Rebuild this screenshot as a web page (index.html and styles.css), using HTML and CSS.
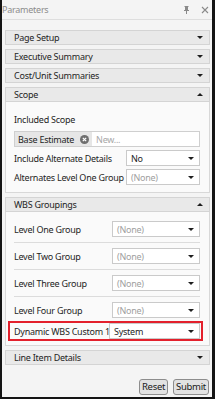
FILE: index.html
```html
<!DOCTYPE html>
<html lang="en">
<head>
    <meta charset="UTF-8">
    <title>Parameters</title>
    <link rel="stylesheet" href="styles.css">
</head>
<body>
    <div class="window">
        <div class="titlebar">
            <span class="title">Parameters</span>
            <span class="title-icons">
                <svg width="7" height="8" viewBox="0 0 7 8"><path d="M1.5 0h4v1h-0.5v3h1v1h-2v3h-1v-3h-2v-1h1v-3h-0.5z" fill="#8a8a8a"/></svg>
                <svg width="8" height="8" viewBox="0 0 8 8"><path d="M1 1l6 6M7 1l-6 6" stroke="#8a8a8a" stroke-width="1.1"/></svg>
            </span>
        </div>
        <div class="panels">
            <div class="section">
                <div class="header"><span>Page Setup</span><span class="arrow down"></span></div>
            </div>
            <div class="section">
                <div class="header"><span>Executive Summary</span><span class="arrow down"></span></div>
            </div>
            <div class="section">
                <div class="header"><span>Cost/Unit Summaries</span><span class="arrow down"></span></div>
            </div>
            <div class="section">
                <div class="header"><span>Scope</span><span class="arrow up"></span></div>
                <div class="body scope-body">
                    <div class="label-line">Included Scope</div>
                    <div class="tag-box">
                        <span class="tag">Base Estimate
                            <svg width="9" height="9" viewBox="0 0 9 9"><circle cx="4.5" cy="4.5" r="4.5" fill="#6e6e6e"/><path d="M2.8 2.8l3.4 3.4M6.2 2.8l-3.4 3.4" stroke="#fff" stroke-width="1.2"/></svg>
                        </span>
                        <span class="placeholder">New...</span>
                    </div>
                    <div class="field wide">
                        <span class="field-label">Include Alternate Details</span>
                        <div class="select"><span>No</span><span class="arrow down"></span></div>
                    </div>
                    <div class="field wide">
                        <span class="field-label">Alternates Level One Group</span>
                        <div class="select muted"><span>(None)</span><span class="arrow down"></span></div>
                    </div>
                </div>
            </div>
            <div class="section">
                <div class="header"><span>WBS Groupings</span><span class="arrow up"></span></div>
                <div class="body wbs-body">
                    <div class="field">
                        <span class="field-label">Level One Group</span>
                        <div class="select muted"><span>(None)</span><span class="arrow down"></span></div>
                    </div>
                    <div class="divider"></div>
                    <div class="field">
                        <span class="field-label">Level Two Group</span>
                        <div class="select muted"><span>(None)</span><span class="arrow down"></span></div>
                    </div>
                    <div class="divider"></div>
                    <div class="field">
                        <span class="field-label">Level Three Group</span>
                        <div class="select muted"><span>(None)</span><span class="arrow down"></span></div>
                    </div>
                    <div class="divider"></div>
                    <div class="field">
                        <span class="field-label">Level Four Group</span>
                        <div class="select muted"><span>(None)</span><span class="arrow down"></span></div>
                    </div>
                    <div class="field highlight">
                        <span class="field-label">Dynamic WBS Custom 1</span>
                        <div class="select"><span>System</span><span class="arrow down"></span></div>
                    </div>
                </div>
            </div>
            <div class="section">
                <div class="header"><span>Line Item Details</span><span class="arrow down"></span></div>
            </div>
            <div class="footer">
                <button class="btn">Reset</button>
                <button class="btn">Submit</button>
            </div>
        </div>
    </div>
</body>
</html>
```
FILE: styles.css
```css
body {
    margin: 0;
    padding: 0;
    font-family: "Noto Sans", sans-serif;
    font-size: 9px;
    letter-spacing: -0.25px;
    color: #1e1e1e;
    background: #111;
}

.window {
    width: 215px;
    height: 399px;
    box-sizing: border-box;
    border-left: 2px solid #141414;
    border-right: 3px solid #141414;
    border-bottom: 2px solid #141414;
    background: #f4f4f4;
    display: flex;
    flex-direction: column;
}

.titlebar {
    height: 19px;
    display: flex;
    justify-content: space-between;
    align-items: center;
    color: #8c8c8c;
}

.title-icons {
    display: flex;
    align-items: center;
    gap: 11px;
    padding-right: 3px;
}

.panels {
    flex: 1;
    border-top: 1px solid #dedede;
    padding: 10px 2px 0 3px;
    display: flex;
    flex-direction: column;
    gap: 4px;
}

.header {
    height: 15px;
    box-sizing: border-box;
    background: #e9e9e9;
    border: 1px solid #d4d4d4;
    padding: 0 6px 0 8px;
    display: flex;
    justify-content: space-between;
    align-items: center;
}

.arrow {
    width: 0;
    height: 0;
    border-left: 3px solid transparent;
    border-right: 3px solid transparent;
}

.arrow.down {
    border-top: 3px solid #1e1e1e;
}

.arrow.up {
    border-bottom: 3px solid #1e1e1e;
}

.body {
    background: #fafafa;
    border: 1px solid #d8d8d8;
    border-top: none;
    padding: 0 9px 0 8px;
}

.scope-body {
    padding-top: 11px;
    padding-bottom: 7px;
}

.label-line {
    height: 14px;
    line-height: 14px;
}

.tag-box {
    margin-top: 4px;
    height: 16px;
    box-sizing: border-box;
    background: #fff;
    border: 1px solid #cfcfcf;
    display: flex;
    align-items: center;
    gap: 4px;
}

.tag {
    background: #e6e6e6;
    height: 14px;
    padding: 0 3px 0 3px;
    display: flex;
    align-items: center;
    gap: 6px;
}

.placeholder {
    color: #a8a8a8;
}

.field {
    display: flex;
    align-items: center;
    height: 16px;
}

.field-label {
    width: 98px;
    flex: none;
    white-space: nowrap;
}

.field.wide {
    margin-top: 3px;
}

.field.wide .field-label {
    width: 112px;
}

.select {
    flex: 1;
    height: 16px;
    box-sizing: border-box;
    background: #fff;
    border: 1px solid #cacaca;
    padding: 0 5px 0 4px;
    display: flex;
    justify-content: space-between;
    align-items: center;
}

.select.muted {
    color: #a0a0a0;
}

.select .arrow.down {
    border-left-width: 3.5px;
    border-right-width: 3.5px;
    border-top-width: 3.5px;
}

.wbs-body {
    padding-top: 9px;
    padding-bottom: 4px;
}

.divider {
    height: 1px;
    background: #dcdcdc;
    margin: 5px 0;
}

.field.highlight {
    height: 20px;
    box-sizing: border-box;
    margin: 3px -3px 0 -6px;
    border: 2px solid #e3202c;
    padding: 0 1px 0 4px;
}

.field.highlight .field-label {
    width: 95px;
}

.footer {
    margin-top: auto;
    display: flex;
    justify-content: flex-end;
    gap: 5px;
    padding: 0 1px 2px 0;
}

.btn {
    height: 16px;
    padding: 0 2px;
    font-family: "Noto Sans", sans-serif;
    font-size: 9.5px;
    letter-spacing: -0.3px;
    color: #1a1a1a;
    background: #e2e2e2;
    border: 1px solid #8d8d8d;
    border-radius: 3px;
    line-height: 12px;
}
```
